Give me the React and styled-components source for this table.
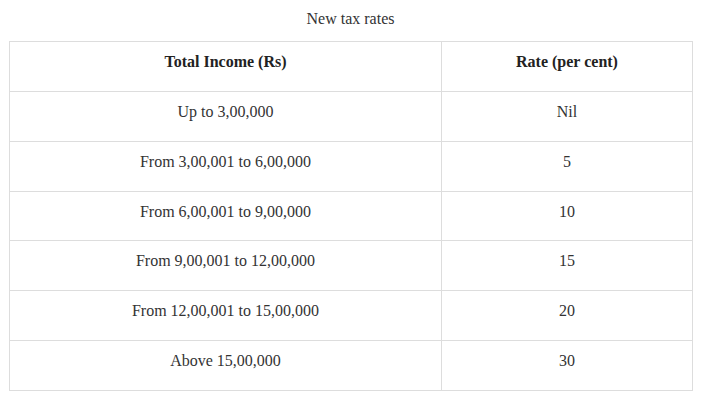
import styled, { createGlobalStyle } from "styled-components";

const GlobalStyle = createGlobalStyle`
  body {
    margin: 0;
    background: #fff;
    font-family: "Liberation Serif", "Times New Roman", serif;
    color: #222;
  }
`;

const Wrapper = styled.div`
  padding: 9px 15px 0 9px;
  display: flex;
  flex-direction: column;
  align-items: stretch;
`;

const Caption = styled.div`
  text-align: center;
  font-size: 16px;
  line-height: 20px;
  color: #333;
  margin-bottom: 12px;
`;

const Table = styled.table`
  width: 684px;
  border-collapse: collapse;
  table-layout: fixed;
`;

const Cell = styled.td`
  border: 1px solid #dddddd;
  text-align: center;
  font-size: 16px;
  line-height: 20px;
  padding: 10px 10px 18.86px;
  font-weight: ${({ $head }) => ($head ? 700 : 400)};
  color: ${({ $head }) => ($head ? "#222" : "#333")};
`;

const rows = [
  ["Up to 3,00,000", "Nil"],
  ["From 3,00,001 to 6,00,000", "5"],
  ["From 6,00,001 to 9,00,000", "10"],
  ["From 9,00,001 to 12,00,000", "15"],
  ["From 12,00,001 to 15,00,000", "20"],
  ["Above 15,00,000", "30"],
];

const App = () => {
  return (
    <>
      <GlobalStyle />
      <Wrapper>
        <Caption>New tax rates</Caption>
        <Table>
          <colgroup>
            <col style={{ width: 432 }} />
            <col />
          </colgroup>
          <tbody>
            <tr>
              <Cell $head>Total Income (Rs)</Cell>
              <Cell $head>Rate (per cent)</Cell>
            </tr>
            {rows.map(([income, rate]) => (
              <tr key={income}>
                <Cell>{income}</Cell>
                <Cell>{rate}</Cell>
              </tr>
            ))}
          </tbody>
        </Table>
      </Wrapper>
    </>
  );
};

export default App;
